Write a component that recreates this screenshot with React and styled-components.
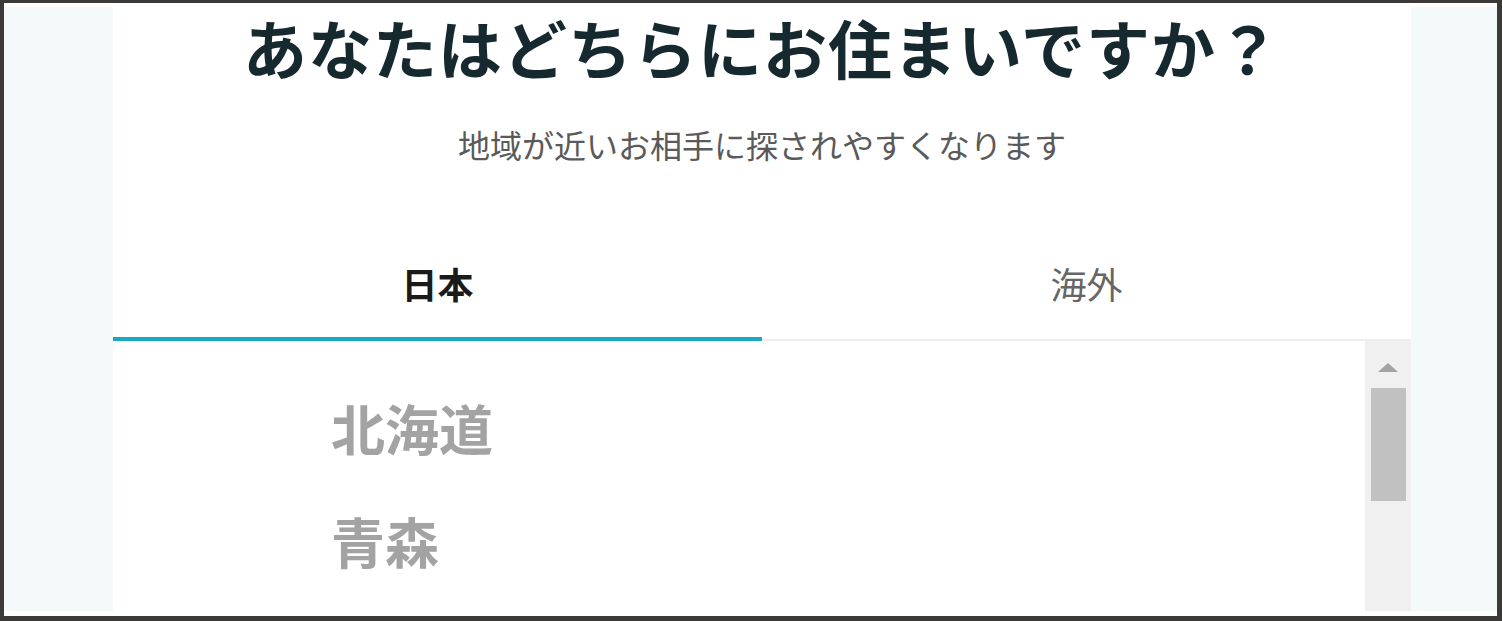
import { useState } from "react";
import styled, { createGlobalStyle } from "styled-components";

const GlobalStyle = createGlobalStyle`
  html, body {
    margin: 0;
    padding: 0;
  }
  body {
    font-family: "Noto Sans CJK JP", "Noto Sans", sans-serif;
    background: #ffffff;
  }
`;

const prefectures = ["北海道", "青森", "岩手", "宮城", "秋田", "山形", "福島"];

const App = () => {
  const [tab, setTab] = useState("japan");

  return (
    <>
      <GlobalStyle />
      <Frame>
        <Page>
          <Panel>
            <Title>あなたはどちらにお住まいですか？</Title>
            <Subtitle>地域が近いお相手に探されやすくなります</Subtitle>
            <Tabs>
              <Tab $active={tab === "japan"} onClick={() => setTab("japan")}>
                日本
              </Tab>
              <Tab $active={tab === "abroad"} onClick={() => setTab("abroad")}>
                海外
              </Tab>
            </Tabs>
            <ListArea>
              <List>
                {prefectures.map((name) => (
                  <Item key={name}>{name}</Item>
                ))}
              </List>
              <Scrollbar>
                <ArrowUp />
                <Thumb />
              </Scrollbar>
            </ListArea>
          </Panel>
        </Page>
      </Frame>
    </>
  );
};

const Frame = styled.div`
  box-sizing: border-box;
  width: 1502px;
  height: 621px;
  border-style: solid;
  border-color: #3b3a39;
  border-width: 3px 5px 5px 4px;
  padding: 4px 0 5px 0;
  background: #ffffff;
  overflow: hidden;
`;

const Page = styled.div`
  height: 100%;
  background: #f4fafa;
  padding-left: 109px;
`;

const Panel = styled.div`
  width: 1298px;
  height: 100%;
  background: #ffffff;
  display: flex;
  flex-direction: column;
  overflow: hidden;
`;

const Title = styled.h1`
  margin: 0;
  text-align: center;
  font-size: 64px;
  line-height: 78px;
  font-weight: 700;
  color: #16292f;
  letter-spacing: 1px;
  white-space: nowrap;
`;

const Subtitle = styled.p`
  margin: 37px 0 0;
  text-align: center;
  font-size: 32px;
  line-height: 44px;
  font-weight: 400;
  color: #5a5a5a;
`;

const Tabs = styled.div`
  display: flex;
  margin-top: 63px;
  border-bottom: 2px solid #eeeeee;
`;

const Tab = styled.div`
  flex: 1;
  height: 108px;
  display: flex;
  align-items: center;
  justify-content: center;
  font-size: 36px;
  font-weight: ${(p) => (p.$active ? 700 : 400)};
  color: ${(p) => (p.$active ? "#1a1a1a" : "#666666")};
  border-bottom: 4px solid ${(p) => (p.$active ? "#16a9c1" : "transparent")};
  margin-bottom: -2px;
  cursor: pointer;
`;

const ListArea = styled.div`
  flex: 1;
  display: flex;
  min-height: 0;
`;

const List = styled.div`
  flex: 1;
  padding: 30px 0 0 218px;
  overflow: hidden;
`;

const Item = styled.div`
  font-size: 54px;
  line-height: 113px;
  font-weight: 700;
  color: #a3a3a3;
`;

const Scrollbar = styled.div`
  width: 46px;
  background: #f0f0f0;
  display: flex;
  flex-direction: column;
  align-items: center;
  padding-top: 22px;
`;

const ArrowUp = styled.div`
  width: 0;
  height: 0;
  border-left: 10px solid transparent;
  border-right: 10px solid transparent;
  border-bottom: 9px solid #a3a3a3;
`;

const Thumb = styled.div`
  width: 35px;
  height: 113px;
  margin-top: 16px;
  background: #c1c1c1;
`;

export default App;
